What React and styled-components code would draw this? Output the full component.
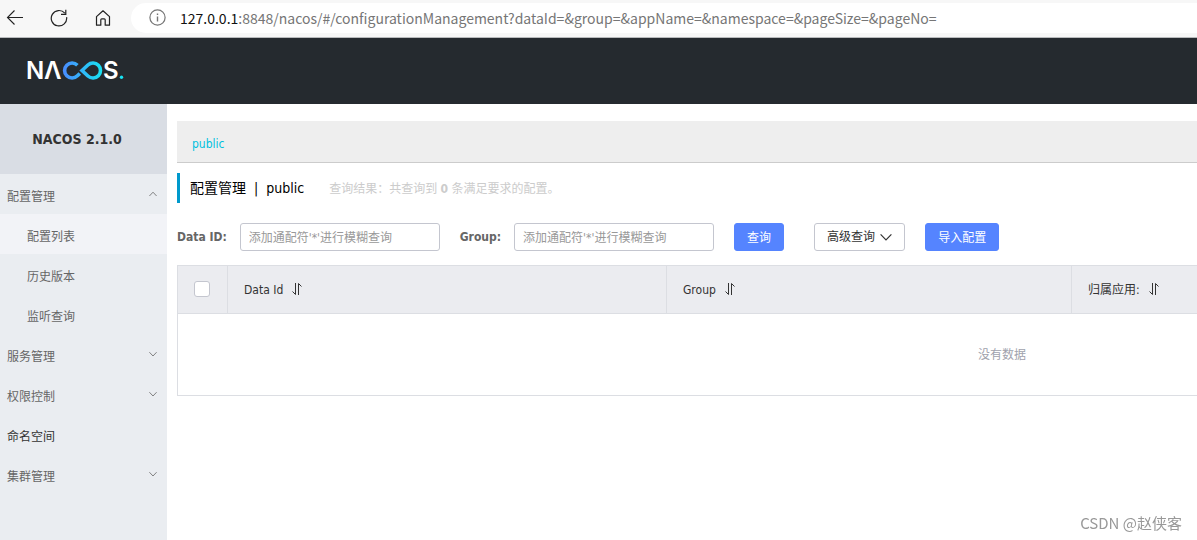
import React, { useState } from 'react'
import styled, { createGlobalStyle } from 'styled-components'

const GlobalStyle = createGlobalStyle`
  * {
    box-sizing: border-box;
  }

  body {
    margin: 0;
    background: #fff;
    color: #333;
    font-family: 'DejaVu Sans Condensed', 'Noto Sans CJK SC', sans-serif;
    font-size: 12px;
    line-height: 20px;
  }

  button,
  input {
    font: inherit;
  }
`

const Page = styled.div`
  display: flex;
  flex-direction: column;
  min-height: 100vh;
  overflow: hidden;
`

const BrowserBar = styled.div`
  display: flex;
  align-items: center;
  height: 38px;
  padding: 0 0 2px 6px;
  background: #f7f7f7;
  border-bottom: 1px solid #b9bbbd;
`

const BrowserButton = styled.button`
  display: flex;
  flex: none;
  width: 18px;
  height: 18px;
  margin-right: 26px;
  padding: 0;
  border: 0;
  background: none;
  color: #222;

  &:last-of-type {
    margin-right: 19px;
  }
`

const Address = styled.div`
  display: flex;
  flex: 1;
  align-items: center;
  gap: 14px;
  height: 30px;
  padding-left: 18px;
  border-radius: 15px 0 0 15px;
  background: #fff;
  color: #767676;
  font-family: 'Noto Sans CJK SC', sans-serif;
  font-size: 14px;
  white-space: nowrap;
`

const Host = styled.span`
  color: #111;
`

const Header = styled.header`
  display: flex;
  align-items: center;
  height: 66px;
  padding-left: 26px;
  background: #252a2f;
`

const Body = styled.div`
  display: flex;
  flex: 1;
`

const Sidebar = styled.nav`
  flex: none;
  width: 167px;
  background: #eaedf1;
`

const Version = styled.h1`
  margin: 0;
  padding-right: 13px;
  background: #d9dde4;
  color: #333;
  font-size: 14px;
  font-weight: 700;
  line-height: 70px;
  text-align: center;
`

const MenuList = styled.ul`
  margin: 0;
  padding: 0;
  list-style: none;
`

const menuEntry = ({ $dark }) => `
  display: flex;
  align-items: center;
  justify-content: space-between;
  width: 100%;
  height: 40px;
  border: 0;
  background: none;
  color: ${$dark ? '#333' : '#666'};
  line-height: 20px;
  text-align: left;
  text-decoration: none;
`

const MenuToggle = styled.button`
  ${menuEntry}
  padding: 6px 10px 0 7px;

  svg {
    margin-bottom: 6px;
  }
`

const MenuLink = styled.a`
  ${menuEntry}
  padding: 6px 0 0 ${({ $nested }) => ($nested ? '27px' : '7px')};
  background: ${({ $active }) => ($active ? '#f2f3f7' : 'none')};
`

const Main = styled.main`
  flex: 1;
  min-width: 0;
  padding: 17px 0 0 10px;
  overflow: hidden;
`

const Namespaces = styled.div`
  height: 42px;
  padding: 3px 15px 0;
  border-bottom: 1px solid #ccc;
  background: #eee;
`

const NamespaceLink = styled.a`
  color: #00c1de;
  line-height: 40px;
  text-decoration: none;
`

const TitleBar = styled.div`
  display: flex;
  align-items: center;
  height: 30px;
  margin: 10px 0 20px;
  padding-left: 10px;
  border-left: 3px solid #09c;
`

const Title = styled.h2`
  display: flex;
  gap: 8px;
  margin: 0 25px 0 0;
  color: #000;
  font-size: 14px;
  font-weight: 400;
`

const Result = styled.p`
  margin: 0;
  padding-top: 2px;
  color: #ccc;
`

const SearchForm = styled.form`
  display: flex;
  align-items: center;
  gap: 20px;
  margin-bottom: 14px;
`

const Field = styled.label`
  display: flex;
  align-items: center;
  gap: 13px;
  color: #666;
  font-weight: 700;
  white-space: nowrap;
`

const TextInput = styled.input`
  width: 200px;
  height: 28px;
  padding: 2px 8px 0;
  border: 1px solid #c4c6cf;
  border-radius: 3px;
  color: #333;
  font-weight: 400;

  &::placeholder {
    color: #999;
  }
`

const Button = styled.button`
  display: flex;
  align-items: center;
  justify-content: center;
  gap: 5px;
  height: 28px;
  padding: ${({ $primary }) => ($primary ? '2px 12px 0' : '0 12px')};
  border: 1px solid ${({ $primary }) => ($primary ? '#5584ff' : '#c4c6cf')};
  border-radius: 3px;
  background: ${({ $primary }) => ($primary ? '#5584ff' : '#fff')};
  color: ${({ $primary }) => ($primary ? '#fff' : '#333')};
  white-space: nowrap;
`

const Advanced = styled.div`
  padding-left: 10px;
`

// The table keeps its full width, columns past the window edge are cut off
const Table = styled.table`
  width: 1650px;
  border: 1px solid #dcdee3;
  border-collapse: collapse;
  table-layout: fixed;
`

const HeadCell = styled.th`
  width: ${({ $width }) => $width || 'auto'};
  height: 48px;
  padding: 0 16px;
  border: 1px solid #dcdee3;
  background: #ebecf0;
  color: #333;
  font-weight: 400;
  text-align: left;
`

const SortButton = styled.button`
  display: flex;
  align-items: center;
  gap: 8px;
  padding: 0;
  border: 0;
  background: none;
  color: inherit;

  svg {
    margin-bottom: 2px;
  }
`

const Checkbox = styled.input`
  display: block;
  width: 16px;
  height: 16px;
  margin: 0 0 2px;
  appearance: none;
  border: 1px solid #c4c6cf;
  border-radius: 3px;
  background: #fff;

  &:checked {
    background: #5584ff;
  }
`

const EmptyCell = styled.td`
  height: 82px;
  padding: 0;
  color: #a0a2ad;
  text-align: center;
`

const Watermark = styled.div`
  position: fixed;
  right: 15px;
  bottom: 7px;
  color: #999;
  font-family: 'Noto Sans CJK SC', sans-serif;
  font-size: 15px;
`

const Chevron = ({ up, size = 8 }) => (
  <svg width={size} height={size} viewBox="0 0 8 8" fill="none" stroke="currentColor" strokeWidth="0.8">
    <path d={up ? 'M0.4 6 4 2.2 7.6 6' : 'M0.4 2.2 4 6 7.6 2.2'} />
  </svg>
)

const SortIcon = () => (
  <svg width="12" height="14" viewBox="0 0 12 14" fill="none" stroke="currentColor">
    <path d="M4.5 1v11.5L1.5 9.5M7.5 13V1.5L10.5 4.5" />
  </svg>
)

const Logo = () => (
  <svg width="110" height="34" viewBox="0 0 110 34" role="img" aria-label="NACOS">
    <defs>
      <linearGradient id="loop" gradientUnits="userSpaceOnUse" x1="37" y1="0" x2="76" y2="0">
        <stop offset="0" stopColor="#4a8cff" />
        <stop offset="1" stopColor="#18e2f2" />
      </linearGradient>
    </defs>
    <g fill="#fff" fontFamily="Inter, sans-serif" fontSize="24" fontWeight="600">
      <text x="0" y="25">N</text>
      <text x="18" y="25">Λ</text>
      <text x="77" y="25">S</text>
    </g>
    <g fill="none" stroke="url(#loop)" strokeWidth="3.6">
      <path d="M51.4 11.2A7.5 7.5 0 1 0 51.4 21.8L53.8 19.4" />
      <path d="M56 16.5 61.9 11A7.5 7.5 0 1 1 61.9 22Z" />
    </g>
    <circle cx="95.5" cy="23.3" r="1.7" fill="#18e2f2" />
  </svg>
)

const menu = [
  { label: '配置管理', children: ['配置列表', '历史版本', '监听查询'] },
  { label: '服务管理', children: [] },
  { label: '权限控制', children: [] },
  { label: '命名空间' },
  { label: '集群管理', children: [] },
]

const columns = [
  { label: 'Data Id', width: '439px' },
  { label: 'Group', width: '405px' },
  { label: '归属应用:' },
]

const SideMenu = () => {
  const [opened, setOpened] = useState('配置管理')

  return (
    <Sidebar>
      <Version>NACOS 2.1.0</Version>
      <MenuList>
        {menu.map(({ label, children }) => (
          <li key={label}>
            {children ? (
              <MenuToggle
                type="button"
                aria-expanded={opened === label}
                onClick={() => setOpened(opened === label ? null : label)}
              >
                {label}
                <Chevron up={opened === label} />
              </MenuToggle>
            ) : (
              <MenuLink href="#" $dark>
                {label}
              </MenuLink>
            )}
            {opened === label && (
              <MenuList>
                {children.map((child, index) => (
                  <li key={child}>
                    <MenuLink href="#" $nested $active={index === 0}>
                      {child}
                    </MenuLink>
                  </li>
                ))}
              </MenuList>
            )}
          </li>
        ))}
      </MenuList>
    </Sidebar>
  )
}

const Browser = () => (
  <BrowserBar>
    <BrowserButton type="button" aria-label="Back">
      <svg width="18" height="18" viewBox="0 0 18 18" fill="none" stroke="currentColor" strokeWidth="1.1">
        <path d="M17 8.5H1.5M8.5 1.5 1.5 8.5l7 7" />
      </svg>
    </BrowserButton>
    <BrowserButton type="button" aria-label="Refresh">
      <svg width="18" height="18" viewBox="0 0 18 18" fill="none" stroke="currentColor" strokeWidth="1.2">
        <path d="M16.6 8.2A7.7 7.7 0 1 1 14.8 4.2M15.8 0.8v4.6h-4.8" />
      </svg>
    </BrowserButton>
    <BrowserButton type="button" aria-label="Home">
      <svg width="18" height="18" viewBox="0 0 18 18" fill="none" stroke="currentColor" strokeWidth="1.2">
        <path d="M2.5 7.6 9 1.8l6.5 5.8v8.6h-4.3v-5.4a1 1 0 0 0-1-1H7.8a1 1 0 0 0-1 1v5.4H2.5Z" strokeLinejoin="round" />
      </svg>
    </BrowserButton>
    <Address>
      <svg width="17" height="17" viewBox="0 0 17 17" fill="none" stroke="currentColor" strokeWidth="1.2">
        <circle cx="8.5" cy="8.5" r="7.6" />
        <path d="M8.5 7.4v5M8.5 4.4v1.6" strokeWidth="1.4" />
      </svg>
      <span>
        <Host>127.0.0.1</Host>
        :8848/nacos/#/configurationManagement?dataId=&amp;group=&amp;appName=&amp;namespace=&amp;pageSize=&amp;pageNo=
      </span>
    </Address>
  </BrowserBar>
)

const App = () => (
  <Page>
    <GlobalStyle />
    <Browser />
    <Header>
      <Logo />
    </Header>
    <Body>
      <SideMenu />
      <Main>
        <Namespaces>
          <NamespaceLink href="#">public</NamespaceLink>
        </Namespaces>
        <TitleBar>
          <Title>
            <span>配置管理</span>
            <span>|</span>
            <span>public</span>
          </Title>
          <Result>
            查询结果：共查询到 <strong>0</strong> 条满足要求的配置。
          </Result>
        </TitleBar>
        <SearchForm onSubmit={e => e.preventDefault()}>
          <Field>
            Data ID:
            <TextInput type="text" placeholder="添加通配符'*'进行模糊查询" />
          </Field>
          <Field>
            Group:
            <TextInput type="text" placeholder="添加通配符'*'进行模糊查询" />
          </Field>
          <Button type="submit" $primary>
            查询
          </Button>
          <Advanced>
            <Button type="button">
              高级查询
              <Chevron size={12} />
            </Button>
          </Advanced>
          <Button type="button" $primary>
            导入配置
          </Button>
        </SearchForm>
        <Table>
          <thead>
            <tr>
              <HeadCell $width="50px">
                <Checkbox type="checkbox" aria-label="全选" />
              </HeadCell>
              {columns.map(({ label, width }) => (
                <HeadCell key={label} $width={width}>
                  <SortButton type="button">
                    {label}
                    <SortIcon />
                  </SortButton>
                </HeadCell>
              ))}
            </tr>
          </thead>
          <tbody>
            <tr>
              <EmptyCell colSpan={4}>没有数据</EmptyCell>
            </tr>
          </tbody>
        </Table>
      </Main>
    </Body>
    <Watermark>CSDN @赵侠客</Watermark>
  </Page>
)

export default App
